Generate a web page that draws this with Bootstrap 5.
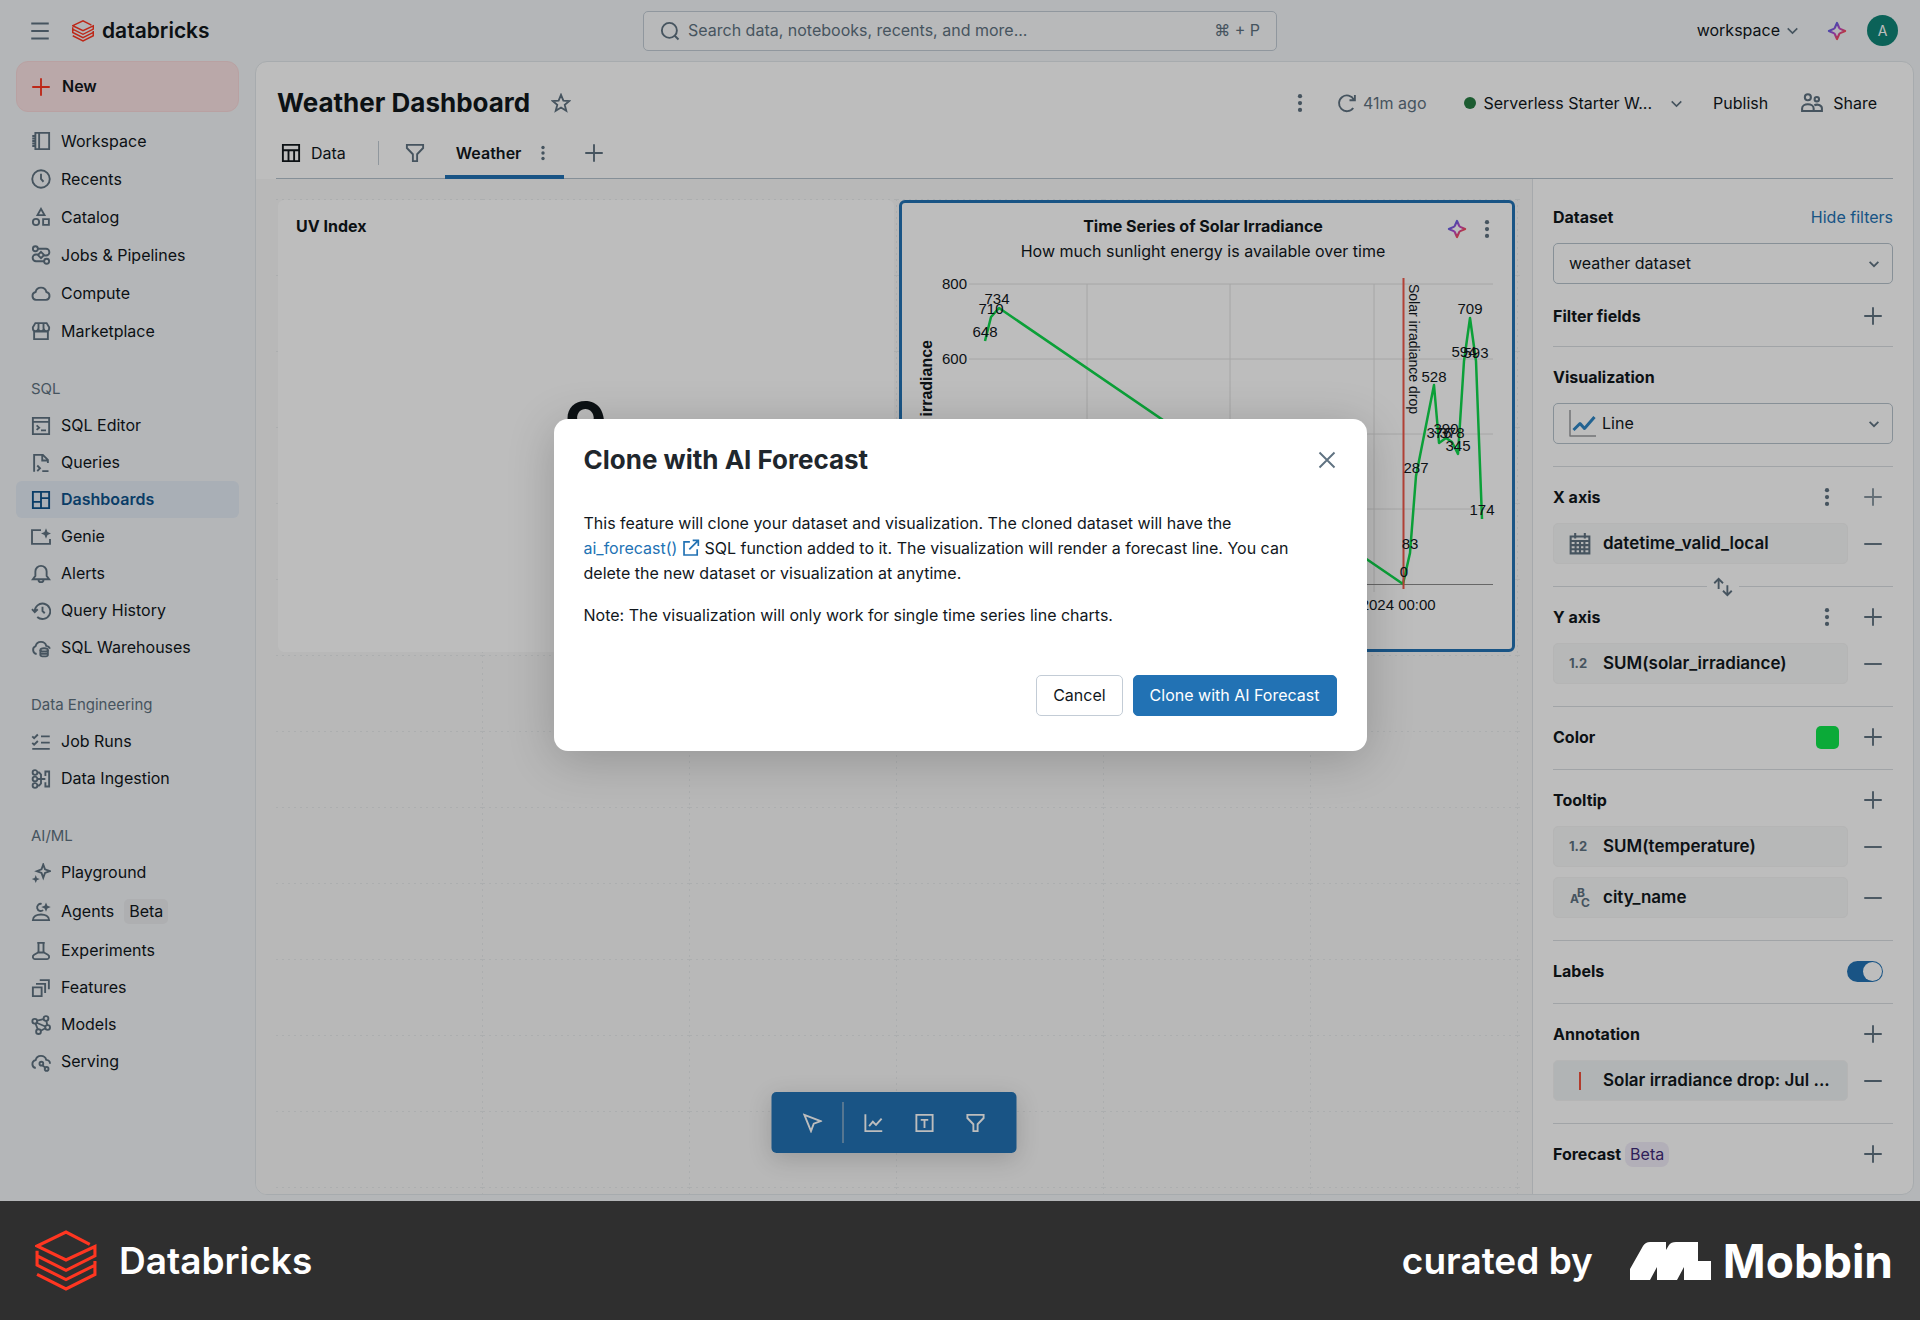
<!DOCTYPE html>
<html lang="en">
<head>
<meta charset="utf-8">
<meta name="viewport" content="width=device-width, initial-scale=1">
<title>Weather Dashboard</title>
<link href="https://cdn.jsdelivr.net/npm/bootstrap@5.3.0/dist/css/bootstrap.min.css" rel="stylesheet">
<style>
:root{--ink:#11171c;--muted:#5f7281;--blue:#2272b4;--line:#d9dee2}
body{font-family:Inter,"Liberation Sans",sans-serif;font-size:16px;line-height:25px;color:var(--ink);background:#2f2f2f}
a{text-decoration:none}
.ico{width:20px;height:20px;flex:none;fill:none;stroke:currentColor;stroke-width:1.5;display:block}
.ico.caret{width:17px;height:17px}
.plain{background:none;border:0;padding:0;color:inherit;display:flex;align-items:center}
.muted{color:var(--muted)}
.app{background:#f3f6f8;position:relative;padding-bottom:6px}
.topbar{height:61px;padding:0 22px;display:grid;grid-template-columns:1fr 634px 1fr}
.wordmark{font-size:21px;font-weight:600}
.brand-ico.ico{color:#ff3621;stroke-width:4;width:22px;height:24px}
.searchbox{height:40px;border:1px solid #c3ccd6;border-radius:5px;padding:0 16px;background:#f8fafb;color:var(--muted)}
.searchbox input{border:0;background:none;outline:0;padding:0;color:inherit}
.searchbox input::placeholder{color:var(--muted);opacity:1}
.avatar{width:31px;height:31px;border-radius:50%;background:#0f8577;color:#fff;font-size:14px}
.side{width:255px;flex:none;padding:0 16px}
.new-btn{width:100%;height:51px;border:1px solid #fadadb;background:#fbe3e5;border-radius:12px;font-weight:600;padding:0 14px;gap:11px;margin-bottom:10px}
.new-btn .ico{color:#ff3621}
.side-list{list-style:none;margin:0;padding:0}
.side-list a{display:flex;align-items:center;gap:10px;height:37px;padding:0 14px 0 15px;border-radius:6px;color:var(--ink)}
.side-list .ico{color:var(--muted)}
.side-list.tall a{height:38px}
.side-list a.on{background:#e4ecf6;color:#0e538b;font-weight:600}
.side-list a.on .ico{color:#0e538b}
.side-list a.roomy{height:41px}
.side-head{font-size:15px;line-height:20px;font-weight:400;color:var(--muted);padding:29px 0 8px 15px;margin:0}
.tagbox{background:#ebecef;border-radius:5px;padding:0 5px}
.tagbox.violet{background:#f1edf8;color:#3f2a78;border-radius:8px}
.panel{flex:1;min-width:0;background:#fff;border:1px solid #e2e7eb;border-radius:12px;margin-right:6px;overflow:hidden}
.page-head{height:66px;padding:16px 36px 0 21px}
.page-title{font-size:26px;line-height:36px;font-weight:700;margin:0}
.tabs{height:51px;margin:0 20px;border-bottom:1px solid #b4c1cc;color:var(--ink)}
.tabs .tab-on{height:51px;border-bottom:4px solid var(--blue);font-weight:600;padding:4px 13px 0 11px;gap:14px}
.vbar{width:1px;height:24px;background:#c3ccd4}
.canvas{flex:1;min-width:0;background:#f8f8f8;position:relative;padding:21px 17px 0 22px}
.dots{position:absolute;left:20px;top:20px;width:calc(100% - 32px);height:calc(100% - 20px)}
.tiles{display:grid;grid-template-columns:1fr 1fr;gap:5px;position:relative}
.tile{background:#fff;border:3px solid #fff;border-radius:6px;min-height:452px}
.tile.chosen{border-color:var(--blue);position:relative}
.tile h2{font-size:16px;line-height:25px;font-weight:700;margin:0}
.big-num{font-size:66px;line-height:72px;font-weight:700;padding-top:151px}
.tile-tools{position:absolute;right:15px;top:16px}
.plot{display:block;width:100%;height:auto}
.plot text{font-family:"Liberation Sans",Arial,sans-serif;font-size:15px;fill:var(--ink)}
.toolbar{position:absolute;left:50%;bottom:41px;transform:translateX(-50%);height:61px;background:var(--blue);border-radius:5px;color:#fff;padding:0 31px;box-shadow:0 6px 24px rgba(0,0,0,.16);display:flex;align-items:center}
.inspector{width:381px;flex:none;border-left:1px solid #e0e4e8;padding:6px 20px 8px}
.sect{padding:10px 0 12px;border-bottom:1px solid var(--line)}
.sect.last{border:0}
.sect.even{padding:12px 0 10px}
.sect.open{padding:12px 0 0;border:0}
.sect.upper{padding-bottom:0;border:0}
.sect-head{height:40px;display:flex;align-items:center;justify-content:space-between;font-weight:700;padding-right:10px}
.fields{padding:6px 0 10px;display:flex;flex-direction:column;gap:10px}
.field-row{display:flex;align-items:center;gap:15px;padding-right:10px}
.chip{flex:1;min-width:0;height:41px;background:#f7f8f8;border-radius:5px;border:1px solid #f4f5f5;padding:0 15px;display:flex;align-items:center;gap:12px;font-weight:600;font-size:17px}
.chip.cool{background:#eff3f5}
.chip .glyph{width:22px;height:22px;flex:none;color:var(--muted)}
.chip .numtag{width:22px;flex:none;font-size:13px;font-weight:700;color:var(--muted)}
.pick{height:41px;border:1px solid #b6c3cc;border-radius:5px;background-color:#fff;color:var(--ink);font-size:16px;line-height:25px;padding:0 40px 0 15px;background-size:14px 14px;background-position:right 11px center;background-image:url("data:image/svg+xml,%3Csvg xmlns='http://www.w3.org/2000/svg' viewBox='0 0 16 16'%3E%3Cpath fill='none' stroke='%235f7281' stroke-width='2' d='M3 5.500l5 5 5-5'/%3E%3C/svg%3E")}
.pick-wrap{position:relative}
.pick-wrap .ico{position:absolute;left:16px;top:7px;width:27px;height:27px}
.pick-wrap .pick{padding-left:48px}
.swap{position:relative;border-bottom:1px solid var(--line)}
.swap-btn{position:absolute;left:50%;top:-9px;transform:translateX(-50%);background:#fff;padding:0 6px}
.swatch{width:23px;height:23px;border-radius:5px;background:#10e64c}
.sw.form-check-input{width:36px;height:21px;margin:0;border:0;background-color:var(--blue);background-size:19px 19px;background-position:right 1px center;background-image:url("data:image/svg+xml,%3Csvg xmlns='http://www.w3.org/2000/svg' viewBox='0 0 20 20'%3E%3Ccircle cx='10' cy='10' r='10' fill='white'/%3E%3C/svg%3E")}
.scrim{position:absolute;inset:0;background:rgba(0,0,0,.26);display:flex;align-items:center;justify-content:center;padding-bottom:31px}
.dialog{width:813px;background:#fff;border-radius:14px;padding:23px 30px 35px;box-shadow:0 8px 48px rgba(0,0,0,.2)}
.dialog h1{font-size:26px;line-height:36px;font-weight:700;margin:0;color:#1f272d}
.dialog p{margin:0 0 17px;padding-right:16px}
.dialog a{color:var(--blue)}
.dialog a .ico{display:inline-block;width:18px;height:18px;vertical-align:-3px}
.act{height:41px;border-radius:5px;padding:0 16px;font-size:16px;border:1px solid #c3ccd6;color:var(--ink);background:#fff}
.act.main{background:var(--blue);border-color:var(--blue);color:#fff}
.credit{height:120px;color:#fff;padding:0 27px 0 35px}
.credit .word{font-size:37px;line-height:48px;font-weight:600}
.credit .brand{font-size:46px;line-height:56px;font-weight:700}
.credit .ico{width:62px;height:62px;color:#ff3621;stroke-width:3}
</style>
</head>
<body>
<svg width="0" height="0" class="position-absolute" aria-hidden="true">
<defs>
<linearGradient id="spark" x1="0" y1="0" x2="1" y2="1"><stop offset=".2" stop-color="#5b62e8"/><stop offset=".5" stop-color="#c04ad0"/><stop offset=".8" stop-color="#ff4a4a"/></linearGradient>
<symbol id="menu" viewBox="0 0 16 16"><path d="M1 2h14M1 8h14M1 14h14"/></symbol>
<symbol id="stack" viewBox="0 0 60 60"><path d="M53 14 30 2 2 15.500 30 29 58 16V25L30 39 2 25V34L30 48 58 34V43L30 57 2 43M2 25V20M58 34V30"/></symbol>
<symbol id="plus" viewBox="0 0 16 16"><path d="M8 1v14M1 8h14"/></symbol>
<symbol id="minus" viewBox="0 0 16 16"><path d="M1 8h14"/></symbol>
<symbol id="kebab" viewBox="0 0 16 16"><g fill="currentColor" stroke="none"><circle cx="8" cy="2.500" r="1.700"/><circle cx="8" cy="8" r="1.700"/><circle cx="8" cy="13.500" r="1.700"/></g></symbol>
<symbol id="chev" viewBox="0 0 16 16"><path d="M3.500 6 8 10.500 12.500 6"/></symbol>
<symbol id="book" viewBox="0 0 16 16"><path d="M3.500 1.500h11v13h-11zM6.500 1.500v13M1 4h2.500M1 8h2.500M1 12h2.500M1 6h2M1 10h2"/></symbol>
<symbol id="clock" viewBox="0 0 16 16"><circle cx="8" cy="8" r="7"/><path d="M8 3.800V8l2 2.200"/></symbol>
<symbol id="shapes" viewBox="0 0 16 16"><path d="M8 1.500 10.800 6.500H5.200zM9.700 9.700h4.600v4.600H9.700z"/><circle cx="4" cy="12" r="2.500"/></symbol>
<symbol id="flow" viewBox="0 0 16 16"><circle cx="3.500" cy="3" r="2"/><circle cx="12.500" cy="13" r="2"/><path d="M5.500 3H12a2.500 2.500 0 0 1 0 5.400h-1.500M10.500 13H4a2.500 2.500 0 0 1 0-5.400h1.500M8 5.500 10.500 8 8 10.500 5.500 8z"/></symbol>
<symbol id="cloud" viewBox="0 0 16 16"><path d="M4 13.500a3.200 3.200 0 0 1-.3-6.300 4.400 4.400 0 0 1 8.600 0 3.200 3.200 0 0 1-.3 6.300z"/></symbol>
<symbol id="shop" viewBox="0 0 16 16"><path d="M2.500 7.500v7h11v-7M3.500 1.700h9L14.500 5v1a2 2 0 0 1-4.300 0 2.200 2.200 0 0 1-4.400 0A2 2 0 0 1 1.500 6V5zM6 2v4M10 2v4M2.500 8.500h11"/></symbol>
<symbol id="editor" viewBox="0 0 16 16"><path d="M1.500 1.500h13v13h-13zM1.500 4.700h13M4.500 7.500l2 1.800-2 1.800M8 11.500h4"/></symbol>
<symbol id="query" viewBox="0 0 16 16"><path d="M2.500 15V1.500h7L13.500 5.500V8M9 1.500V6h4.500M5 10l2.200 2.200L5 14.500M9 14.500h5"/></symbol>
<symbol id="dash" viewBox="0 0 16 16"><path d="M1.500 1.500h13v13h-13zM8 1.500v13M1.500 9.500H8M8 6.500h6.500"/></symbol>
<symbol id="genie" viewBox="0 0 16 16"><path d="M8 2.500H.800v11h14.400V9.500"/><path fill="currentColor" stroke="none" d="M12 1l1.200 3L16 5.200 13.200 6.400 12 9.300 10.800 6.400 8 5.200 10.800 4z"/></symbol>
<symbol id="bell" viewBox="0 0 16 16"><path d="M1.500 12.200h13L12.500 9.500V6a4.500 4.500 0 0 0-9 0v3.500zM6 12.500a2 2 0 0 0 4 0"/></symbol>
<symbol id="hist" viewBox="0 0 16 16"><path d="M3 8.500A6.200 6.200 0 1 1 5 12.800M.800 6.500 3 8.900l2.400-2.300M9.200 4.500V8l1.800 1.800"/></symbol>
<symbol id="cloudb" viewBox="0 0 16 16"><path d="M4.500 12.800A3.300 3.300 0 0 1 3.700 6.500a4.400 4.400 0 0 1 8.500-.2c1.500.2 2.500 1 3 2.200"/><ellipse cx="10.500" cy="9.500" rx="3" ry="1.300"/><path d="M7.500 9.500v4c0 1.600 6 1.600 6 0v-4M7.500 11.600c0 1.500 6 1.500 6 0"/></symbol>
<symbol id="checks" viewBox="0 0 16 16"><path d="M1 3.500 2.500 5 5.500 2M1 8.700l1.500 1.500 3-3M8 3.500h7M8 8.500h7M1 13.500h14"/></symbol>
<symbol id="ingest" viewBox="0 0 16 16"><circle cx="3.200" cy="2.800" r="1.900"/><circle cx="3.200" cy="8" r="1.900"/><circle cx="3.200" cy="13.200" r="1.900"/><path d="M5 2.800h1.500L8 4.500v7L6.500 13.200H5M5 8h6.500M11.500 5.500V2h3v12h-3v-3.500"/></symbol>
<symbol id="play" viewBox="0 0 16 16"><path d="M9.800 1.200 11.200 5 15 6.500 11.200 8 9.800 11.800 8.400 8 4.600 6.500 8.400 5z"/><path fill="currentColor" stroke="none" d="M3.800 9.500l.900 2.400L7 12.800l-2.300.9-.9 2.300-.9-2.300-2.300-.9 2.300-.9z"/></symbol>
<symbol id="agent" viewBox="0 0 16 16"><path d="M8.500 1.500a2.900 2.900 0 1 0 1.200 5M1.500 14.500h13c0-6-13-6-13 0z"/><path fill="currentColor" stroke="none" d="M12 .300l1.100 2.600 2.700 1.100-2.700 1.100L12 7.700 10.900 5.100 8.200 4l2.700-1.100z"/></symbol>
<symbol id="flask" viewBox="0 0 16 16"><path d="M5 1.500h6M6 1.500v7.500L2.500 11c-1.800 1-1 3.500.5 3.500h10c1.500 0 2.300-2.500.5-3.500L10 9V1.500M5 9.200h6"/></symbol>
<symbol id="feat" viewBox="0 0 16 16"><path d="M1.500 7.500h7v7h-7zM4 4.700h7.300V12M7 1.700h7.300V9"/></symbol>
<symbol id="model" viewBox="0 0 16 16"><circle cx="3" cy="5" r="1.900"/><circle cx="12" cy="2.800" r="1.900"/><circle cx="13.300" cy="10" r="1.900"/><circle cx="6" cy="13.300" r="1.900"/><path d="M5 4.500l5-1.200M12.300 4.700l.7 3.400M11.500 10.600 7.800 12.600M3.600 6.800l1.800 4.600M4.500 6.200l7 3"/></symbol>
<symbol id="serve" viewBox="0 0 16 16"><path d="M3.800 12.800a3.200 3.200 0 0 1-.1-6.300 4.400 4.400 0 0 1 8.500-.2c1.800.2 3 1.400 3 3M9 10.500l3 2.500"/><circle cx="8.300" cy="9.300" r="1.500"/><circle cx="12.500" cy="13.500" r="1.500"/></symbol>
<symbol id="spk" viewBox="0 0 16 16"><path stroke="url(#spark)" stroke-width="1.700" stroke-linejoin="round" d="M8 1.500 9.700 5.400Q9.900 6 10.600 6.300L14.500 8 10.600 9.700Q9.900 10 9.700 10.600L8 14.500 6.300 10.600Q6.100 10 5.400 9.700L1.500 8 5.400 6.300Q6.100 6 6.300 5.400z"/></symbol>
<symbol id="star" viewBox="0 0 16 16"><path d="M8 1.500 9.900 6.100 14.700 6.400 11 9.500 12.200 14.200 8 11.600 3.800 14.200 5 9.500 1.300 6.400 6.100 6.100z"/></symbol>
<symbol id="table" viewBox="0 0 16 16"><path d="M1.500 1.500h13v13h-13zM1.500 5.800h13M6 5.800v8.700M10.500 5.800v8.700"/></symbol>
<symbol id="funnel" viewBox="0 0 16 16"><path d="M1.500 1.500h13V4L9.700 9v5.500H6.300V9L1.500 4z"/></symbol>
<symbol id="fresh" viewBox="0 0 16 16"><path d="M13 12A6.300 6.300 0 1 1 13.500 5.300M14.300 1.500v4.300H10"/></symbol>
<symbol id="people" viewBox="0 0 16 16"><circle cx="5" cy="3.800" r="2.200"/><circle cx="11.500" cy="5.200" r="1.600"/><path d="M.800 13.800V12c0-4.200 8.400-4.200 8.400 0v1.800zM9.200 13.800h6v-2c0-2.300-3.500-3.300-5.500-2"/></symbol>
<symbol id="lens" viewBox="0 0 16 16"><circle cx="7.500" cy="7.500" r="6"/><path d="M11.800 11.800 14.800 14.800"/></symbol>
<symbol id="cal" viewBox="0 0 16 16"><path d="M1.200 2.500h13.600v12.300H1.200zM1.200 5.800h13.600M1.200 8.800h13.600M1.200 11.800h13.600M4.800 5.800v9M8 5.800v9M11.200 5.800v9M4.500 0v4M11.500 0v4"/></symbol>
<symbol id="arrow" viewBox="0 0 16 16"><path d="M1.500 1.500 14.500 6.500 9 8.500 6.800 14.500z"/></symbol>
<symbol id="chart" viewBox="0 0 16 16"><path d="M1.500 1v13.500H15M4.500 10.500 7.500 7l2.500 2.500L14.500 4.500"/></symbol>
<symbol id="tbox" viewBox="0 0 16 16"><path d="M1.500 1.500h13v13h-13zM5 5.500h6M8 5.500V12"/></symbol>
<symbol id="cross" viewBox="0 0 16 16"><path d="M2 2l12 12M14 2 2 14"/></symbol>
<symbol id="ext" viewBox="0 0 16 16"><path d="M7 2.500H1.800v11.700h11.700V9M9.500 1.200h5v5M14.500 1.200 6.500 9.200"/></symbol>
<symbol id="swap" viewBox="0 0 16 16"><path d="M4.500 9.500V1.500M1 5l3.500-3.500L8 5M11.500 6.500v8M8 11l3.500 3.500L15 11"/></symbol>
</defs>
</svg>

<div class="app">
  <header class="topbar align-items-center">
    <div class="d-flex align-items-center ps-2">
      <button class="plain muted" type="button" aria-label="Menu"><svg class="ico"><use href="#menu"/></svg></button>
      <a href="#" class="d-flex align-items-center gap-2 text-reset" style="margin-left:22px">
        <svg class="ico brand-ico"><use href="#stack"/></svg>
        <span class="wordmark">databricks</span>
      </a>
    </div>
    <div class="searchbox d-flex align-items-center gap-2">
      <svg class="ico"><use href="#lens"/></svg>
      <input class="flex-grow-1" type="text" aria-label="Search" placeholder="Search data, notebooks, recents, and more...">
      <span>⌘ + P</span>
    </div>
    <div class="d-flex align-items-center justify-content-end">
      <button class="plain gap-1" type="button">workspace <svg class="ico caret muted"><use href="#chev"/></svg></button>
      <button class="plain" style="margin:0 20px 0 26px" type="button" aria-label="Assistant"><svg class="ico"><use href="#spk"/></svg></button>
      <span class="avatar d-flex align-items-center justify-content-center">A</span>
    </div>
  </header>

  <div class="d-flex">
    <nav class="side">
      <button class="plain new-btn" type="button"><svg class="ico"><use href="#plus"/></svg>New</button>
      <ul class="side-list tall">
        <li><a href="#"><svg class="ico"><use href="#book"/></svg>Workspace</a></li>
        <li><a href="#"><svg class="ico"><use href="#clock"/></svg>Recents</a></li>
        <li><a href="#"><svg class="ico"><use href="#shapes"/></svg>Catalog</a></li>
        <li><a href="#"><svg class="ico"><use href="#flow"/></svg>Jobs &amp; Pipelines</a></li>
        <li><a href="#"><svg class="ico"><use href="#cloud"/></svg>Compute</a></li>
        <li><a href="#"><svg class="ico"><use href="#shop"/></svg>Marketplace</a></li>
      </ul>
      <h2 class="side-head">SQL</h2>
      <ul class="side-list">
        <li><a href="#"><svg class="ico"><use href="#editor"/></svg>SQL Editor</a></li>
        <li><a href="#"><svg class="ico"><use href="#query"/></svg>Queries</a></li>
        <li><a href="#" class="on"><svg class="ico"><use href="#dash"/></svg>Dashboards</a></li>
        <li><a href="#"><svg class="ico"><use href="#genie"/></svg>Genie</a></li>
        <li><a href="#"><svg class="ico"><use href="#bell"/></svg>Alerts</a></li>
        <li><a href="#"><svg class="ico"><use href="#hist"/></svg>Query History</a></li>
        <li><a href="#"><svg class="ico"><use href="#cloudb"/></svg>SQL Warehouses</a></li>
      </ul>
      <h2 class="side-head">Data Engineering</h2>
      <ul class="side-list">
        <li><a href="#"><svg class="ico"><use href="#checks"/></svg>Job Runs</a></li>
        <li><a href="#"><svg class="ico"><use href="#ingest"/></svg>Data Ingestion</a></li>
      </ul>
      <h2 class="side-head">AI/ML</h2>
      <ul class="side-list">
        <li><a href="#"><svg class="ico"><use href="#play"/></svg>Playground</a></li>
        <li><a href="#" class="roomy"><svg class="ico"><use href="#agent"/></svg>Agents <span class="tagbox">Beta</span></a></li>
        <li><a href="#"><svg class="ico"><use href="#flask"/></svg>Experiments</a></li>
        <li><a href="#"><svg class="ico"><use href="#feat"/></svg>Features</a></li>
        <li><a href="#"><svg class="ico"><use href="#model"/></svg>Models</a></li>
        <li><a href="#"><svg class="ico"><use href="#serve"/></svg>Serving</a></li>
      </ul>
    </nav>

    <main class="panel d-flex flex-column">
      <div class="page-head d-flex align-items-center">
        <h1 class="page-title">Weather Dashboard</h1>
        <button class="plain muted" style="margin-left:21px" type="button" aria-label="Favorite"><svg class="ico"><use href="#star"/></svg></button>
        <div class="ms-auto d-flex align-items-center">
          <button class="plain muted" type="button" aria-label="More"><svg class="ico"><use href="#kebab"/></svg></button>
          <button class="plain muted" style="margin-left:27px;gap:6px" type="button"><svg class="ico"><use href="#fresh"/></svg>41m ago</button>
          <button class="plain gap-2" style="margin-left:37px" type="button"><svg width="12" height="12"><circle cx="6" cy="6" r="6" fill="#277c43"/></svg>Serverless Starter W... <svg class="ico caret muted ms-2"><use href="#chev"/></svg></button>
          <button class="plain" style="margin-left:28px" type="button">Publish</button>
          <button class="plain" style="gap:10px;margin-left:33px" type="button"><svg class="ico muted" style="width:22px;height:22px"><use href="#people"/></svg>Share</button>
        </div>
      </div>
      <div class="tabs d-flex align-items-center">
        <a href="#" class="d-flex align-items-center text-reset" style="gap:10px;margin-left:5px"><svg class="ico"><use href="#table"/></svg>Data</a>
        <span class="vbar" style="margin:0 26px 0 32px"></span>
        <button class="plain muted" style="margin-right:20px" type="button" aria-label="Filters"><svg class="ico"><use href="#funnel"/></svg></button>
        <a href="#" class="tab-on d-flex align-items-center text-reset">Weather <svg class="ico muted" style="width:16px;height:16px"><use href="#kebab"/></svg></a>
        <button class="plain muted" style="margin-left:20px" type="button" aria-label="Add page"><svg class="ico"><use href="#plus"/></svg></button>
      </div>

      <div class="d-flex flex-grow-1">
        <section class="canvas">
          <svg class="dots" aria-hidden="true">
            <defs><pattern id="grid" width="207" height="76" patternUnits="userSpaceOnUse"><path d="M0 .5H207M206.500 0V76" stroke="#e9ebec" stroke-dasharray="2 4" fill="none"/></pattern></defs>
            <rect width="100%" height="100%" fill="url(#grid)"/>
          </svg>
          <div class="tiles">
            <article class="tile">
              <h2 style="padding:11px 0 0 15px">UV Index</h2>
              <div class="big-num text-center">9</div>
            </article>
            <article class="tile chosen">
              <div class="text-center pe-2" style="padding-top:11px">
                <h2>Time Series of Solar Irradiance</h2>
                <div>How much sunlight energy is available over time</div>
              </div>
              <div class="tile-tools d-flex">
                <button class="plain" type="button" aria-label="Assistant"><svg class="ico"><use href="#spk"/></svg></button>
                <button class="plain muted" style="margin-left:10px" type="button" aria-label="Widget menu"><svg class="ico"><use href="#kebab"/></svg></button>
              </div>
              <svg class="plot" viewBox="901 264 610 370" role="img" aria-label="Solar irradiance over time">
                <path d="M968 284H1492M968 359H1492M968 434H1492M968 509H1492M1086 284V592M1229 284V592M1373 284V592" stroke="#e0e0e0" fill="none"/>
                <path d="M968 584.500H1492" stroke="#8c8c8c"/>
                <path d="M984 341 990 317 998 308 1402 584 1409 553 1415 476 1433 385 1438 443 1445 438 1451 442 1457 454 1463 361 1469 318 1475 361 1481 519" fill="none" stroke="#10d84c" stroke-width="2.500" stroke-linejoin="round"/>
                <path d="M1402.500 278V589" stroke="#f0584a" stroke-width="2"/>
                <g text-anchor="end"><text x="966" y="289">800</text><text x="966" y="364">600</text><text x="966" y="439">400</text><text x="966" y="514">200</text><text x="966" y="589">0</text></g>
                <g text-anchor="middle">
                  <text x="984" y="337">648</text><text x="990" y="314">710</text><text x="996" y="304">734</text>
                  <text x="1403" y="577">0</text><text x="1409" y="549">83</text><text x="1415" y="473">287</text><text x="1433" y="382">528</text><text x="1438" y="438">376</text><text x="1445" y="434">390</text><text x="1451" y="438">378</text><text x="1457" y="451">345</text><text x="1463" y="357">594</text><text x="1469" y="314">709</text><text x="1475" y="358">593</text><text x="1481" y="515">174</text>
                  <text x="1086" y="610">Jul 07, 2024 00:00</text><text x="1373" y="610">Jul 09, 2024 00:00</text>
                </g>
                <text transform="translate(931 340) rotate(-90)" text-anchor="end" style="font-size:16px;font-weight:700">Sum of solar irradiance</text>
                <text transform="translate(1408 284) rotate(90)" style="font-size:14px">Solar irradiance drop</text>
              </svg>
            </article>
          </div>
          <div class="toolbar">
            <button class="plain" type="button" aria-label="Select"><svg class="ico"><use href="#arrow"/></svg></button>
            <span class="vbar" style="height:41px;margin:0 20px"></span>
            <button class="plain" type="button" aria-label="Add visualization"><svg class="ico"><use href="#chart"/></svg></button>
            <button class="plain" style="margin:0 31px" type="button" aria-label="Add text"><svg class="ico"><use href="#tbox"/></svg></button>
            <button class="plain" type="button" aria-label="Add filter"><svg class="ico"><use href="#funnel"/></svg></button>
          </div>
        </section>

        <aside class="inspector">
          <div class="sect open">
            <div class="sect-head pe-0"><label for="ds">Dataset</label><a href="#" class="fw-normal" style="color:var(--blue)">Hide filters</a></div>
            <div style="padding-top:6px"><select id="ds" class="form-select pick"><option>weather dataset</option></select></div>
          </div>
          <div class="sect even"><div class="sect-head">Filter fields<button class="plain muted" type="button" aria-label="Add filter field"><svg class="ico"><use href="#plus"/></svg></button></div></div>
          <div class="sect">
            <div class="sect-head"><label for="viz">Visualization</label></div>
            <div class="fields"><div class="pick-wrap">
              <select id="viz" class="form-select pick"><option>Line</option></select>
              <svg class="ico" viewBox="0 0 27 27" stroke-linejoin="round"><path d="M1 0V26H27" stroke="#9a9ca0"/><path d="M4.500 20 11 13.500 15.500 18.500 25.500 7" stroke="#2f86c5" stroke-width="3"/></svg>
            </div></div>
          </div>
          <div class="sect upper">
            <div class="sect-head">X axis<span class="d-flex" style="gap:26px"><button class="plain muted" type="button" aria-label="X axis menu"><svg class="ico"><use href="#kebab"/></svg></button><button class="plain muted opacity-75" type="button" aria-label="Add X field"><svg class="ico"><use href="#plus"/></svg></button></span></div>
            <div class="fields" style="padding-bottom:22px"><div class="field-row"><div class="chip"><svg class="ico glyph"><use href="#cal"/></svg><span>datetime_valid_local</span></div><button class="plain muted" type="button" aria-label="Remove"><svg class="ico"><use href="#minus"/></svg></button></div></div>
          </div>
          <div class="swap"><button class="plain muted swap-btn" type="button" aria-label="Swap axes"><svg class="ico"><use href="#swap"/></svg></button></div>
          <div class="sect">
            <div class="sect-head">Y axis<span class="d-flex" style="gap:26px"><button class="plain muted" type="button" aria-label="Y axis menu"><svg class="ico"><use href="#kebab"/></svg></button><button class="plain muted" type="button" aria-label="Add Y field"><svg class="ico"><use href="#plus"/></svg></button></span></div>
            <div class="fields"><div class="field-row"><div class="chip"><span class="numtag">1.2</span><span>SUM(solar_irradiance)</span></div><button class="plain muted" type="button" aria-label="Remove"><svg class="ico"><use href="#minus"/></svg></button></div></div>
          </div>
          <div class="sect"><div class="sect-head">Color<span class="d-flex align-items-center" style="gap:24px"><span class="swatch"></span><button class="plain muted" type="button" aria-label="Add color"><svg class="ico"><use href="#plus"/></svg></button></span></div></div>
          <div class="sect">
            <div class="sect-head">Tooltip<button class="plain muted" type="button" aria-label="Add tooltip"><svg class="ico"><use href="#plus"/></svg></button></div>
            <div class="fields">
              <div class="field-row"><div class="chip"><span class="numtag">1.2</span><span>SUM(temperature)</span></div><button class="plain muted" type="button" aria-label="Remove"><svg class="ico"><use href="#minus"/></svg></button></div>
              <div class="field-row"><div class="chip"><svg class="glyph" viewBox="0 0 22 22" fill="currentColor" font-size="12" font-weight="700"><text x="1" y="16">A</text><text x="8" y="10">B</text><text x="12" y="20">C</text></svg><span>city_name</span></div><button class="plain muted" type="button" aria-label="Remove"><svg class="ico"><use href="#minus"/></svg></button></div>
            </div>
          </div>
          <div class="sect"><div class="sect-head"><label for="lab">Labels</label><input id="lab" class="form-check-input sw rounded-pill" type="checkbox" role="switch" checked></div></div>
          <div class="sect">
            <div class="sect-head">Annotation<button class="plain muted" type="button" aria-label="Add annotation"><svg class="ico"><use href="#plus"/></svg></button></div>
            <div class="fields"><div class="field-row"><div class="chip cool"><svg class="ico glyph" viewBox="0 0 22 22"><path d="M11 2V20" stroke="#f0503c" stroke-width="2"/></svg><span class="text-nowrap">Solar irradiance drop: Jul ...</span></div><button class="plain muted" type="button" aria-label="Remove"><svg class="ico"><use href="#minus"/></svg></button></div></div>
          </div>
          <div class="sect last"><div class="sect-head"><span class="d-flex gap-1">Forecast <span class="tagbox violet fw-normal">Beta</span></span><button class="plain muted" type="button" aria-label="Add forecast"><svg class="ico"><use href="#plus"/></svg></button></div></div>
        </aside>
      </div>
    </main>
  </div>

  <div class="scrim">
    <div class="dialog" role="dialog" aria-labelledby="dlg">
      <div class="d-flex align-items-center justify-content-between" style="margin-bottom:33px">
        <h1 id="dlg">Clone with AI Forecast</h1>
        <button class="plain muted" type="button" aria-label="Close"><svg class="ico"><use href="#cross"/></svg></button>
      </div>
      <p>This feature will clone your dataset and visualization. The cloned dataset will have the <a href="#">ai_forecast() <svg class="ico"><use href="#ext"/></svg></a> SQL function added to it. The visualization will render a forecast line. You can delete the new dataset or visualization at anytime.</p>
      <p>Note: The visualization will only work for single time series line charts.</p>
      <div class="d-flex justify-content-end" style="gap:10px;padding-top:30px">
        <button type="button" class="act">Cancel</button>
        <button type="button" class="act main">Clone with AI Forecast</button>
      </div>
    </div>
  </div>
</div>

<footer class="credit d-flex align-items-center justify-content-between">
  <div class="d-flex align-items-center" style="gap:22px">
    <svg class="ico"><use href="#stack"/></svg>
    <span class="word">Databricks</span>
  </div>
  <div class="d-flex align-items-center">
    <span class="word">curated by</span>
    <svg width="81" height="38" viewBox="0 0 81 38" fill="#fff" style="margin:0 12px 0 37px"><path d="M0 38V27L13 4Q15.500 0 20 0H36V8L39 3Q41 0 46 0H68V19H81V38H54V25L47 38H27V25L20 38z"/></svg>
    <span class="brand">Mobbin</span>
  </div>
</footer>
<script src="https://cdn.jsdelivr.net/npm/bootstrap@5.3.0/dist/js/bootstrap.bundle.min.js"></script>
</body>
</html>
